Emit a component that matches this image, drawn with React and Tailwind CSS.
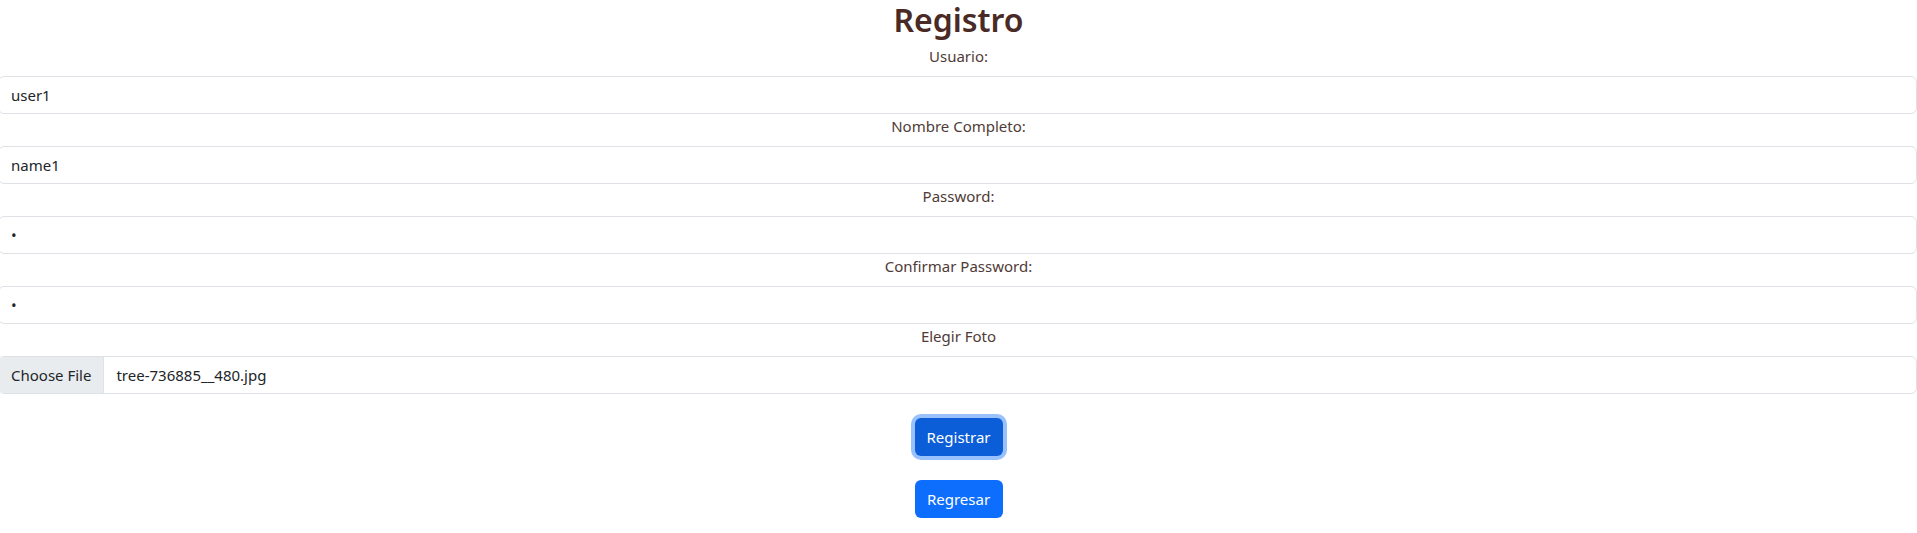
import React, { useState } from 'react';

const fields = [
  { label: 'Usuario:', type: 'text', value: 'user1' },
  { label: 'Nombre Completo:', type: 'text', value: 'name1' },
  { label: 'Password:', type: 'password', value: 'a' },
  { label: 'Confirmar Password:', type: 'password', value: 'a' },
];

const Registro = () => {
  const [values, setValues] = useState(fields.map((f) => f.value));

  const handleChange = (i, v) => {
    const next = [...values];
    next[i] = v;
    setValues(next);
  };

  return (
    <div
      className="w-full bg-white text-center text-[#212529]"
      style={{ fontFamily: '"Noto Sans", "Open Sans", sans-serif' }}
    >
      {/* Title */}
      <h2 className="text-[32px] font-semibold leading-[40px] mb-[4px] text-[#4a2a25]">Registro</h2>

      {/* Inputs */}
      {fields.map((f, i) => (
        <div key={f.label}>
          <label className="block text-[15px] leading-6 mb-2 text-[#4f3b37]">{f.label}</label>
          <input
            type={f.type}
            value={values[i]}
            onChange={(e) => handleChange(i, e.target.value)}
            className="block -ml-[2px] w-[calc(100%+2px)] h-[38px] px-3 text-[15px] text-[#212529] bg-white border border-[#dee2e6] rounded-md outline-none"
          />
        </div>
      ))}

      {/* File picker */}
      <div>
        <label className="block text-[15px] leading-6 mb-2 text-[#4f3b37]">Elegir Foto</label>
        <div className="flex items-stretch -ml-[2px] w-[calc(100%+2px)] h-[38px] text-left text-[15px] bg-white border border-[#dee2e6] rounded-md overflow-hidden">
          <span className="flex shrink-0 items-center px-3 whitespace-nowrap bg-[#e9ecef] border-r border-[#dee2e6]">Choose File</span>
          <span className="flex items-center pl-3 whitespace-nowrap">tree-736885__480.jpg</span>
        </div>
      </div>

      {/* Buttons */}
      <div className="flex flex-col items-center">
        <button className="mt-6 w-[88px] h-[38px] rounded-md bg-[#0b5ed7] text-white text-[15px] ring-4 ring-[#98c1fe]">
          Registrar
        </button>
        <button className="mt-6 w-[88px] h-[38px] rounded-md bg-[#0d6efd] text-white text-[15px]">
          Regresar
        </button>
      </div>
    </div>
  );
};

export default function App() {
  return <Registro />;
}
